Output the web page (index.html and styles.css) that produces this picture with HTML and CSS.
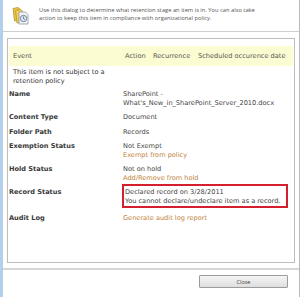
FILE: index.html
```html
<!DOCTYPE html>
<html>
<head>
<meta charset="utf-8">
<link rel="stylesheet" href="styles.css">
</head>
<body>
<div class="frame">
  <div class="strip"></div>
  <div class="main">
    <div class="header">
      <svg class="icon" width="17" height="19" viewBox="0 0 17 19">
        <path d="M1 2.5 L6 1.5 L8 3 L8 14 L2.5 15 Z" fill="#e9c34a" stroke="#b8952c" stroke-width="0.8"/>
        <path d="M3.5 4.5 L8.5 3.5 L10.5 5 L10.5 16 L5 17 Z" fill="#f0cf58" stroke="#b8952c" stroke-width="0.8"/>
        <path d="M7 6 L13.5 6 L16 8.5 L16 18 L7 18 Z" fill="#f4f4f4" stroke="#8e9aa6" stroke-width="0.8"/>
        <circle cx="11.5" cy="12.5" r="3.2" fill="#dfe8f2" stroke="#5f7d9c" stroke-width="0.9"/>
        <path d="M11.5 10.5 L11.5 12.7 L13 13.5" fill="none" stroke="#3d5775" stroke-width="0.7"/>
      </svg>
      <div class="intro">Use this dialog to determine what retention stage an item is in. You can also take action to keep this item in compliance with organizational policy.</div>
    </div>
    <div class="content">
      <div class="box">
        <div class="events-head">
          <span class="c-event">Event</span>
          <span class="c-action">Action</span>
          <span class="c-rec">Recurrence</span>
          <span class="c-date">Scheduled occurence date</span>
        </div>
        <div class="no-policy">This item is not subject to a retention policy</div>
        <div class="props">
          <div class="label">Name</div>
          <div class="value">SharePoint -<br>What's_New_in_SharePoint_Server_2010.docx</div>
          <div class="label">Content Type</div>
          <div class="value">Document</div>
          <div class="label">Folder Path</div>
          <div class="value">Records</div>
          <div class="label">Exemption Status</div>
          <div class="value">Not Exempt<br><span class="link">Exempt from policy</span></div>
          <div class="label">Hold Status</div>
          <div class="value">Not on hold<br><span class="link">Add/Remove from hold</span></div>
          <div class="label">Record Status</div>
          <div class="value"><div class="highlight">Declared record on 3/28/2011<br>You cannot declare/undeclare item as a record.</div></div>
          <div class="label">Audit Log</div>
          <div class="value"><span class="link">Generate audit log report</span></div>
        </div>
      </div>
    </div>
    <div class="footer">
      <button class="close">Close</button>
    </div>
  </div>
</div>
</body>
</html>
```

FILE: styles.css
```css
html, body {
  margin: 0;
  padding: 0;
  background: #ffffff;
}
.frame {
  display: flex;
  width: 300px;
  height: 297px;
  font-family: "DejaVu Sans", Verdana, sans-serif;
  color: #4a4a4a;
}
.strip {
  width: 3px;
  background: #b3cfec;
}
.main {
  flex: 1;
  display: flex;
  flex-direction: column;
  border-right: 1px solid #b9b9b9;
}
.header {
  height: 32px;
  border-bottom: 1px solid #cfcfcf;
  display: flex;
  box-sizing: border-box;
}
.icon {
  margin: 6px 0 0 9px;
  flex: none;
}
.intro {
  margin: 6px 0 0 10px;
  width: 232px;
  font-family: "Open Sans", sans-serif;
  font-size: 5.75px;
  line-height: 8px;
  color: #555;
}
.content {
  padding: 6px 4px 0 4px;
}
.box {
  border: 1px solid #bdbdbd;
  height: 225px;
  padding-top: 7px;
  box-sizing: border-box;
}
.events-head {
  display: grid;
  grid-template-columns: 112px 28px 45px 1fr;
  background: #fcfcd2;
  height: 20px;
  align-items: center;
  margin: 0 1px;
  padding-left: 4px;
  font-size: 6.6px;
  color: #555;
}
.no-policy {
  font-size: 6.6px;
  line-height: 8.5px;
  width: 100px;
  padding: 2px 0 0 5px;
  color: #333;
}
.props {
  display: grid;
  grid-template-columns: 114px 1fr;
  row-gap: 6px;
  margin-top: 5px;
  padding-left: 1px;
  font-size: 6.6px;
  line-height: 8.5px;
}
.label {
  font-weight: bold;
  color: #3a3a3a;
}
.value {
  color: #444;
}
.link {
  color: #c0823a;
}
.highlight {
  border: 2px solid #d51f2e;
  margin: -4px 6px 0 -1px;
  padding: 2px 1px 1px 1px;
}
.footer {
  margin-top: 5px;
  border-top: 2px solid #d6d6d6;
  display: flex;
  justify-content: flex-end;
  padding: 5px 11px 0 0;
}
.close {
  width: 89px;
  height: 13px;
  border: 1px solid #9b9b9b;
  border-radius: 1px;
  background: linear-gradient(#f5f5f5, #dedede);
  font-family: "Open Sans", sans-serif;
  font-size: 5.5px;
  color: #444;
  padding: 0;
}
```
